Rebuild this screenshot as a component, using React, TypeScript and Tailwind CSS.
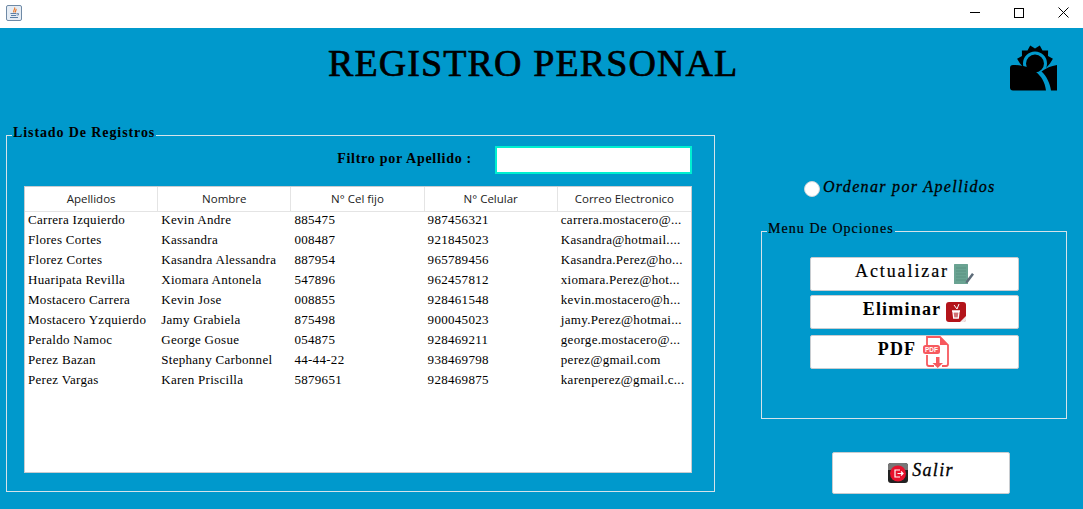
const serif = 'font-["Liberation_Serif",serif]';

const rows = [
  ['Carrera Izquierdo', 'Kevin Andre', '885475', '987456321', 'carrera.mostacero@...'],
  ['Flores Cortes', 'Kassandra', '008487', '921845023', 'Kasandra@hotmail....'],
  ['Florez Cortes', 'Kasandra Alessandra', '887954', '965789456', 'Kasandra.Perez@ho...'],
  ['Huaripata Revilla', 'Xiomara Antonela', '547896', '962457812', 'xiomara.Perez@hot...'],
  ['Mostacero Carrera', 'Kevin Jose', '008855', '928461548', 'kevin.mostacero@h...'],
  ['Mostacero Yzquierdo', 'Jamy Grabiela', '875498', '900045023', 'jamy.Perez@hotmai...'],
  ['Peraldo Namoc', 'George Gosue', '054875', '928469211', 'george.mostacero@...'],
  ['Perez Bazan', 'Stephany Carbonnel', '44-44-22', '938469798', 'perez@gmail.com'],
  ['Perez Vargas', 'Karen Priscilla', '5879651', '928469875', 'karenperez@gmail.c...'],
];

const headers = ['Apellidos', 'Nombre', 'N° Cel fijo', 'N° Celular', 'Correo Electronico'];

// sun spikes of the logo, upper half only
const sunSpikes = Array.from({ length: 13 }, (_, i) => {
  const a = Math.PI + (i / 12) * Math.PI;
  const r = i % 2 === 0 ? 15 : 18.5;
  return `${(25 + r * Math.cos(a)).toFixed(1)},${(18.5 + r * Math.sin(a)).toFixed(1)}`;
}).join(' ');

const JavaIcon = () => (
  <svg width="16" height="16" viewBox="0 0 16 16">
    <rect x="0.5" y="0.5" width="15" height="15" rx="1.5" fill="#e6edf5" stroke="#6f8aa6" />
    <path d="M8.5 2.5C10 4 6.5 5 8 7.5M10 4C10.5 5.2 9 6 9.5 7.5" stroke="#e8792b" strokeWidth="1.2" fill="none" />
    <path d="M4.5 8.5h6M5 10.5h5M4 12.5h8" stroke="#5b7fa6" strokeWidth="1" fill="none" />
    <path d="M11 8.5h1.5v1.5H10.5" stroke="#5b7fa6" strokeWidth="0.8" fill="none" />
  </svg>
);

const SunLogo = () => (
  <svg width="48" height="46" viewBox="0 0 48 46">
    <polygon points={`${sunSpikes} 36 23 14 23`} fill="#000" />
    <circle cx="25" cy="18.500" r="10.500" fill="#000" stroke="#0099cc" strokeWidth="3" />
    <path d="M3 20C12 20 20 22 26 27C31 31 35 37 36 45.500H3a3 3 0 0 1-3-3V23a3 3 0 0 1 3-3z" fill="#000" />
    <path d="M47 20V45.500H41C40 38 36.500 31 31.500 26.500C36 23 41 21 47 20z" fill="#000" />
  </svg>
);

const NoteIcon = () => (
  <svg width="20" height="20" viewBox="0 0 20 20">
    <rect x="0" y="0" width="14" height="20" rx="0.5" fill="#6aa392" />
    <path d="M2 4h10M2 7h10M2 10h10M2 13h10M2 16h10" stroke="#5b9281" strokeWidth="1" />
    <path d="M12 17l6-8 2 1.500-6 8-2.500.5z" fill="#5d6b78" />
  </svg>
);

const TrashIcon = () => (
  <svg width="20" height="20" viewBox="0 0 20 20">
    <rect width="20" height="20" rx="3" fill="#b3141a" />
    <path d="M14 20l6-6v4a2 2 0 0 1-2 2z" fill="#f1e6e6" />
    <path d="M6 9h8M7 10l.7 6h4.600l.7-6z" stroke="#fff" strokeWidth="1.300" fill="none" />
    <path d="M9 11v4M11 11v4" stroke="#fff" strokeWidth="0.800" />
    <path d="M8 3l3 4M13 2l-2 5" stroke="#fff" strokeWidth="1" />
  </svg>
);

const PdfIcon = () => (
  <svg width="28" height="32" viewBox="0 0 28 32">
    <path d="M4 10V1h13l8 8v19a2 2 0 0 1-2 2h-4M4 19v9a2 2 0 0 0 2 2h5" stroke="#f7595e" strokeWidth="1.800" fill="none" />
    <path d="M17 1v8h8z" fill="#f7595e" />
    <rect x="0" y="9" width="17" height="9" rx="2.500" fill="#f7595e" />
    <text x="8.500" y="16" fontSize="6.500" fill="#fff" textAnchor="middle" fontFamily="Liberation Sans, sans-serif">PDF</text>
    <path d="M13 21h3.500v6h3.500l-5.250 5-5.250-5h3.500z" fill="#f7595e" />
  </svg>
);

const ExitIcon = () => (
  <svg width="20" height="20" viewBox="0 0 20 20">
    <rect width="20" height="20" rx="3" fill="#222" />
    <path d="M0 3a3 3 0 0 1 3-3h14a3 3 0 0 1 3 3v4H0z" fill="#777" />
    <circle cx="10" cy="10.500" r="8" fill="#e8112d" />
    <path d="M12 7H7v7h5M9.500 10.500H15M13 8.500l2 2-2 2" stroke="#fff" strokeWidth="1.200" fill="none" />
  </svg>
);

const CloseIcon = () => (
  <svg width="11" height="11" viewBox="0 0 11 11">
    <path d="M0.500 0.500l10 10M10.500 0.500l-10 10" stroke="#000" strokeWidth="1" />
  </svg>
);

const MenuButton = ({ label, icon, className, spacing }: { label: string; icon: React.ReactNode; className: string; spacing: string }) => (
  <button className={`w-[209px] h-[34px] bg-white border border-[#c8ccd0] rounded-[2px] flex items-center justify-center text-black ${className}`}>
    <span className={`${serif} text-[18px] leading-none -mt-[6px] ${spacing}`}>{label}</span>
    {icon}
  </button>
);

export default function App() {
  return (
    <div className="w-[1083px] h-[509px] overflow-hidden flex flex-col bg-[#0099cc]">
      {/* window title bar */}
      <div className="h-[28px] bg-white flex items-center justify-between shrink-0">
        <div className="ml-[6px] -mt-[2px]">
          <JavaIcon />
        </div>
        <div className="flex items-center -mt-[3px]">
          <div className="w-[38px] flex justify-center"><div className="w-[10px] h-px bg-black" /></div>
          <div className="w-[50px] flex justify-center"><div className="w-[10px] h-[10px] border border-black" /></div>
          <div className="w-[39px] flex justify-center"><CloseIcon /></div>
        </div>
      </div>

      {/* heading */}
      <div className="h-[107px] flex items-start shrink-0">
        <h1 className={`${serif} ml-[328px] mt-[13px] text-[38px] leading-[44px] tracking-[1.1px] font-normal text-black whitespace-nowrap [-webkit-text-stroke:0.7px_#000]`}>
          REGISTRO PERSONAL
        </h1>
        <div className="ml-auto mr-[25px] mt-[17px]">
          <SunLogo />
        </div>
      </div>

      <div className="flex pl-[6px] items-start">
        {/* listado */}
        <div className="relative w-[709px] h-[357px] border border-[#d5e3ea] pt-[10px] pl-[17px] pr-[22px]">
          <span className={`${serif} absolute left-[5px] -top-[12px] bg-[#0099cc] px-px text-[14px] leading-[18px] font-bold tracking-[0.9px] text-black whitespace-nowrap`}>
            Listado De Registros
          </span>
          <div className="flex items-center justify-end h-[28px]">
            <span className={`${serif} text-[14px] font-bold tracking-[0.72px] text-black mr-[23px] -mt-[4px]`}>Filtro por Apellido :</span>
            <div className="w-[197px] h-[28px] bg-white border-[2px] border-[#00f0d0]" />
          </div>
          <div className="mt-[12px] h-[287px] bg-white border border-[#c8ccd0]">
            <div className="grid grid-cols-5 h-[25px] border-b border-[#e4e4e4]">
              {headers.map((h, i) => (
                <div
                  key={h}
                  className={`flex items-center justify-center font-["Open_Sans",sans-serif] text-[11.500px] text-[#222] ${i < 4 ? 'border-r border-[#e4e4e4]' : ''}`}
                >
                  {h}
                </div>
              ))}
            </div>
            {rows.map((row) => (
              <div key={row[0]} className="grid grid-cols-5 h-[20px] -translate-y-[2px] items-center">
                {row.map((cell, i) => (
                  <div key={i} className={`${serif} pl-[3px] text-[13px] tracking-[0.3px] text-black whitespace-nowrap overflow-hidden`}>
                    {cell}
                  </div>
                ))}
              </div>
            ))}
          </div>
        </div>

        {/* opciones */}
        <div className="ml-[46px] w-[306px] flex flex-col">
          <div className="mt-[41px] ml-[43px] flex items-center h-[22px]">
            <div className="w-[16px] h-[16px] rounded-full bg-white border border-[#cfd6da] mt-[4px]" />
            <span className={`${serif} ml-[3px] italic text-[16px] tracking-[1.32px] text-black whitespace-nowrap [-webkit-text-stroke:0.3px_#000]`}>Ordenar por Apellidos</span>
          </div>
          <div className="relative mt-[33px] h-[188px] border border-[#d5e3ea] pt-[25px] pl-[48px] flex flex-col">
            <span className={`${serif} absolute left-[5px] -top-[12px] bg-[#0099cc] px-px text-[14px] leading-[18px] tracking-[1.05px] text-black whitespace-nowrap [-webkit-text-stroke:0.2px_#000]`}>
              Menu De Opciones
            </span>
            <MenuButton label="Actualizar" icon={<NoteIcon />} spacing="tracking-[1.9px]" className="gap-[5px] [-webkit-text-stroke:0.2px_#000]" />
            <MenuButton label="Eliminar" icon={<TrashIcon />} spacing="tracking-[1.2px]" className="gap-[5px] mt-[4px] font-bold" />
            <MenuButton label="PDF" icon={<PdfIcon />} spacing="tracking-[1.2px]" className="gap-[7px] mt-[6px] font-bold" />
          </div>
          <button className="mt-[33px] ml-[71px] w-[178px] h-[42px] bg-white border border-[#c8ccd0] rounded-[2px] flex items-center justify-center gap-[4px] text-black">
            <ExitIcon />
            <span className={`${serif} italic text-[18px] leading-none tracking-[1.3px] -mt-[6px] [-webkit-text-stroke:0.3px_#000]`}>Salir</span>
          </button>
        </div>
      </div>
    </div>
  );
}
